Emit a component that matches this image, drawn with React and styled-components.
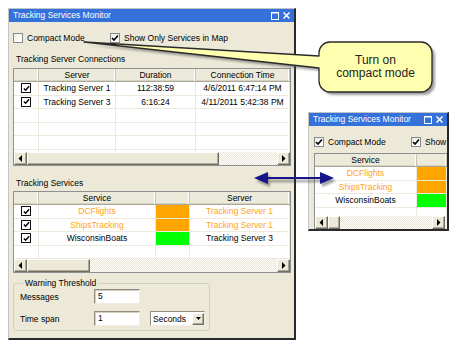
import React from "react";
import styled, { createGlobalStyle } from "styled-components";

const GlobalStyle = createGlobalStyle`
  html, body { margin: 0; padding: 0; background: #ffffff; }
  body { font-family: "Liberation Sans", Arial, sans-serif; font-size: 8.5px; color: #000; }
  * { box-sizing: border-box; }
`;

const Desktop = styled.div`
  position: relative;
  width: 458px;
  height: 347px;
  overflow: hidden;
  background: #ffffff;
  display: flex;
  align-items: flex-start;
  gap: 12px;
  padding: 8px 0 0 8px;
`;

const Window = styled.div`
  width: ${(p) => p.$w}px;
  height: ${(p) => p.$h}px;
  margin-top: ${(p) => p.$top || 0}px;
  background: #ece9d8;
  border-top: 1px solid #c4c4c4;
  border-left: 1px solid #c4c4c4;
  border-right: 2px solid #2a2a2a;
  border-bottom: 2px solid #2a2a2a;
  display: flex;
  flex-direction: column;
  overflow: hidden;
  flex-shrink: 0;
`;

const TitleBar = styled.div`
  height: 13px;
  flex-shrink: 0;
  background: #3571da;
  color: #ffffff;
  display: flex;
  align-items: center;
  padding: 0 4px 0 4px;
  font-size: 8.5px;
  line-height: 13px;
  white-space: nowrap;
`;

const TitleText = styled.span`
  flex: 1;
`;

const TitleButtons = styled.div`
  display: flex;
  align-items: center;
  gap: 4px;
`;

const Body = styled.div`
  padding: 0 0 0 ${(p) => p.$pl}px;
  display: flex;
  flex-direction: column;
`;

const OptionRow = styled.div`
  display: flex;
  align-items: center;
  height: 10px;
  margin-top: 11px;
  white-space: nowrap;
  overflow: hidden;
`;

const Option = styled.label`
  display: flex;
  align-items: center;
  gap: 4px;
  width: ${(p) => (p.$w ? `${p.$w}px` : "auto")};
  flex-shrink: 0;
`;

const CheckBox = styled.span`
  width: 10px;
  height: 10px;
  background: linear-gradient(135deg, #e9e9e4, #ffffff 70%);
  border: 1px solid #8a8a8a;
  display: flex;
  align-items: center;
  justify-content: center;
  flex-shrink: 0;
`;

const SectionLabel = styled.div`
  height: 11px;
  line-height: 11px;
  margin-top: ${(p) => p.$mt}px;
  padding-left: 3px;
`;

const Grid = styled.div`
  width: ${(p) => p.$w}px;
  margin-top: ${(p) => p.$mt}px;
  border: 1px solid #8f9090;
  background: #ffffff;
  display: flex;
  flex-direction: column;
  overflow: hidden;
  flex-shrink: 0;
`;

const HeaderRow = styled.div`
  display: grid;
  grid-template-columns: ${(p) => p.$cols};
  height: 13px;
  background: #ebeadb;
  border-bottom: 1px solid #aca899;
  box-shadow: inset 0 -1px 0 #d6d2c2;
`;

const HeaderCell = styled.div`
  text-align: center;
  line-height: 12px;
  border-right: 1px solid #c7c4b0;
  box-shadow: inset -1px 0 0 #ffffff;
  white-space: nowrap;
  overflow: hidden;
`;

const RowsArea = styled.div`
  height: ${(p) => p.$h}px;
  overflow: hidden;
`;

const Row = styled.div`
  display: grid;
  grid-template-columns: ${(p) => p.$cols};
  height: 13.5px;
  border-bottom: 1px solid #ede9dc;
`;

const Cell = styled.div`
  text-align: center;
  line-height: 12.5px;
  border-right: 1px solid #ede9dc;
  color: ${(p) => p.$color || "#000"};
  background: ${(p) => p.$bg || "transparent"};
  white-space: nowrap;
  overflow: hidden;
  display: flex;
  align-items: center;
  justify-content: center;
`;

const GridCheck = styled.span`
  width: 10px;
  height: 10px;
  border: 1.5px solid #111;
  background: #fff;
  display: flex;
  align-items: center;
  justify-content: center;
`;

const ScrollBar = styled.div`
  display: flex;
  height: 13px;
  flex-shrink: 0;
`;

const ScrollButton = styled.div`
  width: 13px;
  height: 13px;
  flex-shrink: 0;
  background: #ece9d8;
  border-top: 1px solid #ffffff;
  border-left: 1px solid #ffffff;
  border-right: 1px solid #716f64;
  border-bottom: 1px solid #716f64;
  box-shadow: inset -1px -1px 0 #aca899;
  display: flex;
  align-items: center;
  justify-content: center;
`;

const Thumb = styled(ScrollButton)`
  width: ${(p) => p.$w}px;
`;

const Track = styled.div`
  flex: ${(p) => (p.$fixed ? `0 0 ${p.$fixed}px` : "1")};
  background-color: #f6f5ef;
  background-image: repeating-conic-gradient(#ffffff 0 25%, #e8e5d6 0 50%);
  background-size: 2px 2px;
`;

const GroupBox = styled.fieldset`
  width: 197px;
  margin: 5px 0 0 0;
  padding: 1px 0 4px 6px;
  border: 1px solid #d0d0bf;
  border-radius: 3px;
  display: flex;
  flex-direction: column;
  gap: 7px;
`;

const GroupLegend = styled.legend`
  padding: 0 2px;
  margin-left: 3px;
  line-height: 10px;
  font-size: 8.5px;
`;

const FieldRow = styled.div`
  display: flex;
  align-items: center;
  height: 15px;
`;

const FieldLabel = styled.span`
  width: 74px;
  flex-shrink: 0;
`;

const TextBox = styled.div`
  width: 46px;
  height: 15px;
  background: #ffffff;
  border: 1px solid;
  border-color: #8e8c80 #f1efe4 #f1efe4 #8e8c80;
  box-shadow: inset 1px 1px 0 #d4d0c0;
  padding-left: 3px;
  line-height: 13px;
`;

const Select = styled.div`
  width: 55px;
  height: 15px;
  margin-left: 10px;
  background: #ffffff;
  border: 1px solid;
  border-color: #8e8c80 #f1efe4 #f1efe4 #8e8c80;
  display: flex;
  align-items: center;
  padding-left: 2px;
`;

const SelectText = styled.span`
  flex: 1;
`;

const SelectButton = styled(ScrollButton)`
  width: 12px;
  height: 12px;
`;

const Overlay = styled.svg`
  position: absolute;
  left: 0;
  top: 0;
  width: 458px;
  height: 347px;
  pointer-events: none;
`;

const CalloutText = styled.div`
  position: absolute;
  left: 319px;
  top: 44px;
  width: 113px;
  height: 46px;
  display: flex;
  flex-direction: column;
  align-items: center;
  justify-content: center;
  font-family: "Liberation Sans", Arial, sans-serif;
  font-size: 12px;
  line-height: 13px;
  color: #222;
  text-align: center;
`;

const CheckMark = ({ size = 8 }) => (
  <svg width={size} height={size} viewBox="0 0 8 8">
    <path d="M1 4 L3 6 L7 1.5" fill="none" stroke="#000" strokeWidth="1.6" />
  </svg>
);

const Arrow = ({ dir }) => (
  <svg width="5" height="7" viewBox="0 0 5 7">
    {dir === "left" && <path d="M4 0 L0.5 3.5 L4 7 Z" fill="#000" />}
    {dir === "right" && <path d="M1 0 L4.5 3.5 L1 7 Z" fill="#000" />}
    {dir === "down" && <path d="M0 2 L5 2 L2.5 5 Z" fill="#000" />}
  </svg>
);

const WinButtons = () => (
  <TitleButtons>
    <svg width="8" height="8" viewBox="0 0 8 8">
      <rect x="0.5" y="0.5" width="7" height="7" fill="none" stroke="#fff" strokeWidth="1" />
      <line x1="0" y1="1" x2="8" y2="1" stroke="#fff" strokeWidth="1" />
    </svg>
    <svg width="7" height="7" viewBox="0 0 7 7">
      <path d="M0.5 0.5 L6.5 6.5 M6.5 0.5 L0.5 6.5" stroke="#fff" strokeWidth="1.5" />
    </svg>
  </TitleButtons>
);

const Options = ({ compactChecked, showLabel }) => (
  <OptionRow>
    <Option $w={97}>
      <CheckBox>{compactChecked && <CheckMark />}</CheckBox>
      Compact Mode
    </Option>
    <Option>
      <CheckBox>
        <CheckMark />
      </CheckBox>
      {showLabel}
    </Option>
  </OptionRow>
);

const ORANGE = "#ffa41c";
const ORANGE_BG = "#ffa500";
const GREEN = "#00ff00";

const Scroll = ({ thumb, tail }) => (
  <ScrollBar>
    <ScrollButton>
      <Arrow dir="left" />
    </ScrollButton>
    <Thumb $w={thumb} />
    <Track />
    <ScrollButton>
      <Arrow dir="right" />
    </ScrollButton>
    {tail ? <Track $fixed={tail} /> : null}
  </ScrollBar>
);

const conCols = "25px 77px 80px 1fr";
const connections = [
  { server: "Tracking Server 1", duration: "112:38:59", time: "4/6/2011 6:47:14 PM" },
  { server: "Tracking Server 3", duration: "6:16:24", time: "4/11/2011 5:42:38 PM" },
];

const svcCols = "25px 117px 34px 1fr";
const services = [
  { name: "DCFlights", color: ORANGE, bg: ORANGE_BG, server: "Tracking Server 1" },
  { name: "ShipsTracking", color: ORANGE, bg: ORANGE_BG, server: "Tracking Server 1" },
  { name: "WisconsinBoats", color: "#000", bg: GREEN, server: "Tracking Server 3" },
];

const compactCols = "102px 1fr";

const MainWindow = () => (
  <Window $w={288} $h={332}>
    <TitleBar>
      <TitleText>Tracking Services Monitor</TitleText>
      <WinButtons />
    </TitleBar>
    <Body $pl={4}>
      <Options compactChecked={false} showLabel="Show Only Services in Map" />
      <SectionLabel $mt={11}>Tracking Server Connections</SectionLabel>
      <Grid $w={278} $mt={3}>
        <HeaderRow $cols={conCols}>
          <HeaderCell />
          <HeaderCell>Server</HeaderCell>
          <HeaderCell>Duration</HeaderCell>
          <HeaderCell>Connection Time</HeaderCell>
        </HeaderRow>
        <RowsArea $h={70}>
          {connections.map((c) => (
            <Row $cols={conCols} key={c.server}>
              <Cell>
                <GridCheck>
                  <CheckMark size={7} />
                </GridCheck>
              </Cell>
              <Cell>{c.server}</Cell>
              <Cell>{c.duration}</Cell>
              <Cell>{c.time}</Cell>
            </Row>
          ))}
          {[0, 1, 2, 3].map((i) => (
            <Row $cols={conCols} key={`e${i}`}>
              <Cell />
              <Cell />
              <Cell />
              <Cell />
            </Row>
          ))}
        </RowsArea>
        <Scroll thumb={192} />
      </Grid>
      <SectionLabel $mt={12}>Tracking Services</SectionLabel>
      <Grid $w={278} $mt={2}>
        <HeaderRow $cols={svcCols}>
          <HeaderCell />
          <HeaderCell>Service</HeaderCell>
          <HeaderCell />
          <HeaderCell>Server</HeaderCell>
        </HeaderRow>
        <RowsArea $h={54}>
          {services.map((s) => (
            <Row $cols={svcCols} key={s.name}>
              <Cell>
                <GridCheck>
                  <CheckMark size={7} />
                </GridCheck>
              </Cell>
              <Cell $color={s.color}>{s.name}</Cell>
              <Cell $bg={s.bg} />
              <Cell $color={s.color}>{s.server}</Cell>
            </Row>
          ))}
          <Row $cols={svcCols}>
            <Cell />
            <Cell />
            <Cell />
            <Cell />
          </Row>
        </RowsArea>
        <Scroll thumb={63} />
      </Grid>
      <GroupBox>
        <GroupLegend>Warning Threshold</GroupLegend>
        <FieldRow>
          <FieldLabel>Messages</FieldLabel>
          <TextBox>5</TextBox>
        </FieldRow>
        <FieldRow>
          <FieldLabel>Time span</FieldLabel>
          <TextBox>1</TextBox>
          <Select>
            <SelectText>Seconds</SelectText>
            <SelectButton>
              <Arrow dir="down" />
            </SelectButton>
          </Select>
        </FieldRow>
      </GroupBox>
    </Body>
  </Window>
);

const CompactWindow = () => (
  <Window $w={141} $h={119} $top={104}>
    <TitleBar>
      <TitleText>Tracking Services Monitor</TitleText>
      <WinButtons />
    </TitleBar>
    <Body $pl={5}>
      <Options compactChecked showLabel="Show" />
      <Grid $w={134} $mt={6}>
        <HeaderRow $cols={compactCols}>
          <HeaderCell>Service</HeaderCell>
          <HeaderCell />
        </HeaderRow>
        <RowsArea $h={49}>
          {services.map((s) => (
            <Row $cols={compactCols} key={s.name}>
              <Cell $color={s.color}>{s.name}</Cell>
              <Cell $bg={s.bg} />
            </Row>
          ))}
          <Row $cols={compactCols}>
            <Cell />
            <Cell />
          </Row>
        </RowsArea>
        <Scroll thumb={12} tail={2} />
      </Grid>
    </Body>
  </Window>
);

const calloutPath =
  "M330 42 H421 A11 11 0 0 1 432 53 V81 A11 11 0 0 1 421 92 H330 A11 11 0 0 1 319 81 V68 L84 42 L319 56 V53 A11 11 0 0 1 330 42 Z";

export default function App() {
  return (
    <>
      <GlobalStyle />
      <Desktop>
        <MainWindow />
        <CompactWindow />
        <Overlay viewBox="0 0 458 347">
          <defs>
            <filter id="blur" x="-10%" y="-10%" width="120%" height="140%">
              <feGaussianBlur stdDeviation="1.2" />
            </filter>
          </defs>
          <path d={calloutPath} transform="translate(3 3)" fill="#555" opacity="0.55" filter="url(#blur)" />
          <path d={calloutPath} fill="#ffffb0" stroke="#2a2a2a" strokeWidth="1.3" strokeLinejoin="round" />
          <g transform="translate(2 3)" opacity="0.45" filter="url(#blur)">
            <line x1="262" y1="178" x2="326" y2="178" stroke="#333" strokeWidth="2.5" />
            <polygon points="254,178 268,172 268,184" fill="#333" />
            <polygon points="334,178 320,172 320,184" fill="#333" />
          </g>
          <line x1="262" y1="178" x2="326" y2="178" stroke="#16168a" strokeWidth="2.2" />
          <polygon points="254,178 268,172 268,184" fill="#16168a" />
          <polygon points="334,178 320,172 320,184" fill="#16168a" />
        </Overlay>
        <CalloutText>
          <span>Turn on</span>
          <span>compact mode</span>
        </CalloutText>
      </Desktop>
    </>
  );
}
